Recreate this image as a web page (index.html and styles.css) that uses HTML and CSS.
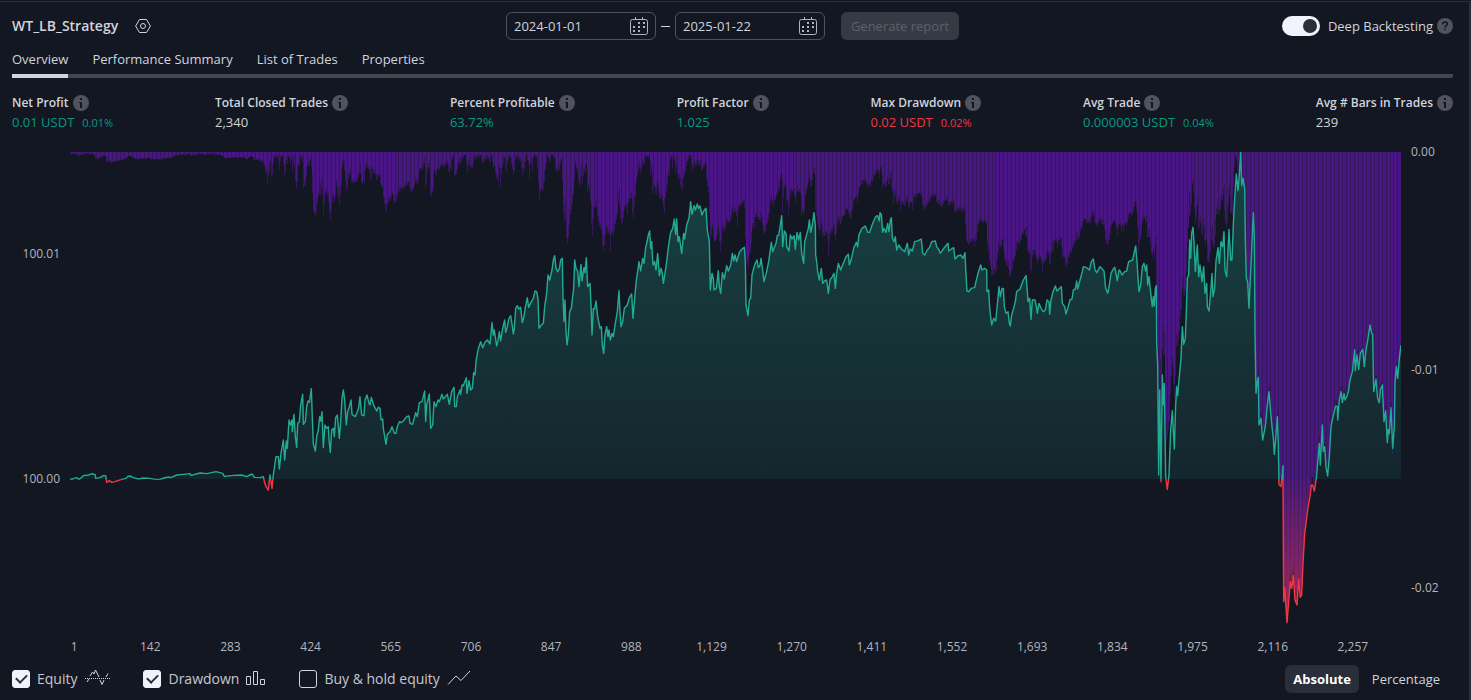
FILE: index.html
```html
<!DOCTYPE html>
<html lang="en">
<head>
<meta charset="utf-8">
<title>Strategy Tester</title>
<link rel="stylesheet" href="styles.css">
</head>
<body>
<svg class="defs" aria-hidden="true">
  <symbol id="info" viewBox="0 0 16 16"><circle cx="8" cy="8" r="8" fill="#50535e"/><path d="M7 3h2v2H7zM6 7h3v6H7V8H6z" fill="#131722"/></symbol>
  <symbol id="help" viewBox="0 0 16 16"><circle cx="8" cy="8" r="8" fill="#50535e"/><path d="M5.7 6.3C5.7 4.800 6.700 4 8 4s2.300.9 2.300 2c0 1.500-2.300 1.700-2.300 3.500M8 10.700v1.600" fill="none" stroke="#131722" stroke-width="1.600"/></symbol>
  <symbol id="calendar" viewBox="0 0 18 18"><rect x=".5" y="2.500" width="17" height="15" rx="2" fill="none" stroke="#b2b5be"/><path d="M5.500 0v3M12.500 0v3" stroke="#b2b5be"/><path d="M8 5h2v2H8zM13 5h2v2h-2zM3 9h2v2H3zM8 9h2v2H8zM13 9h2v2h-2zM3 13h2v2H3zM8 13h2v2H8z" fill="#b2b5be"/></symbol>
</svg>
<main class="tester">
  <header class="header">
    <div class="title">
      <h1 class="name">WT_LB_Strategy</h1>
      <button class="icon-button" aria-label="Settings">
        <svg width="16" height="16" viewBox="0 0 16 16" fill="none" stroke="#d1d4dc"><path d="M4.500 1.500h7L15.400 8l-3.900 6.500h-7L.6 8z"/><circle cx="8" cy="8" r="2.500"/></svg>
      </button>
    </div>
    <div class="range">
      <label class="date"><input type="text" value="2024-01-01" aria-label="From"><svg width="18" height="18"><use href="#calendar"/></svg></label>
      <span class="dash"></span>
      <label class="date"><input type="text" value="2025-01-22" aria-label="To"><svg width="18" height="18"><use href="#calendar"/></svg></label>
      <button class="generate" disabled>Generate report</button>
    </div>
    <div class="deep">
      <label class="deep-label"><input class="switch" type="checkbox" role="switch" checked>Deep Backtesting</label>
      <svg width="16" height="16"><use href="#help"/></svg>
    </div>
  </header>

  <nav class="tabs">
    <button class="tab active">Overview</button>
    <button class="tab">Performance Summary</button>
    <button class="tab">List of Trades</button>
    <button class="tab">Properties</button>
  </nav>

  <section class="metrics">
    <div class="metric"><div class="metric-title">Net Profit<svg width="16" height="16"><use href="#info"/></svg></div><div class="metric-value up">0.01 USDT<small>0.01%</small></div></div>
    <div class="metric"><div class="metric-title">Total Closed Trades<svg width="16" height="16"><use href="#info"/></svg></div><div class="metric-value">2,340</div></div>
    <div class="metric"><div class="metric-title">Percent Profitable<svg width="16" height="16"><use href="#info"/></svg></div><div class="metric-value up">63.72%</div></div>
    <div class="metric"><div class="metric-title">Profit Factor<svg width="16" height="16"><use href="#info"/></svg></div><div class="metric-value up">1.025</div></div>
    <div class="metric"><div class="metric-title">Max Drawdown<svg width="16" height="16"><use href="#info"/></svg></div><div class="metric-value down">0.02 USDT<small>0.02%</small></div></div>
    <div class="metric"><div class="metric-title">Avg Trade<svg width="16" height="16"><use href="#info"/></svg></div><div class="metric-value up">0.000003 USDT<small>0.04%</small></div></div>
    <div class="metric"><div class="metric-title">Avg # Bars in Trades<svg width="16" height="16"><use href="#info"/></svg></div><div class="metric-value">239</div></div>
  </section>

  <section class="chart">
    <div class="axis axis-left"><span class="tick-hi">100.01</span><span class="tick-lo">100.00</span></div>
    <svg class="plot" viewBox="210 21 3993 1416" preserveAspectRatio="none" role="img" aria-label="Equity and drawdown">
      <defs>
        <linearGradient id="fill" gradientUnits="userSpaceOnUse" x1="0" y1="21" x2="0" y2="1437">
          <stop offset="0" stop-color="#22ab94" stop-opacity=".3"/>
          <stop offset=".693" stop-color="#22ab94" stop-opacity=".1"/>
          <stop offset=".693" stop-color="#f23645" stop-opacity=".03"/>
          <stop offset="1" stop-color="#f23645" stop-opacity=".55"/>
        </linearGradient>
        <linearGradient id="stroke" gradientUnits="userSpaceOnUse" x1="0" y1="21" x2="0" y2="1437">
          <stop offset=".693" stop-color="#22ab94"/>
          <stop offset=".693" stop-color="#f23645"/>
        </linearGradient>
      </defs>
      <path id="dd-thin" fill="#33175a" shape-rendering="crispEdges"/>
      <path id="dd-solid" fill="#4a1584" shape-rendering="crispEdges"/>
      <path id="dd-gaps" fill="#33175a" shape-rendering="crispEdges"/>
      <path id="area" fill="url(#fill)"/>
      <path id="line" fill="none" stroke="url(#stroke)" stroke-width="1.400" stroke-linejoin="round" vector-effect="non-scaling-stroke"/>
    </svg>
    <div class="axis axis-right"><span>0.00</span><span class="tick-mid">-0.01</span><span class="tick-end">-0.02</span></div>
  </section>
  <div class="trades">
    <span>1</span><span>142</span><span>283</span><span>424</span><span>565</span><span>706</span><span>847</span><span>988</span><span>1,129</span><span>1,270</span><span>1,411</span><span>1,552</span><span>1,693</span><span>1,834</span><span>1,975</span><span>2,116</span><span>2,257</span>
  </div>

  <footer class="footer">
    <div class="series">
      <label class="check"><input type="checkbox" checked>Equity
        <svg width="26" height="18" viewBox="0 0 26 18" fill="none" stroke="#d1d4dc"><path d="M1 8.500h25" stroke-dasharray="1 1"/><path d="M3 12l2-3M6 6l2.500-4 1.500 2 1.500-4L15 7M16 10l2 4.500 2-4.500M22 7l2-3.500"/></svg></label>
      <label class="check"><input type="checkbox" checked>Drawdown
        <svg width="20" height="18" viewBox="0 0 20 18" fill="none" stroke="#d1d4dc"><path d="M.5 6.500h4v8h-4zM7.500 1.500h4v13h-4zM14.500 9.500h4v5h-4z"/></svg></label>
      <label class="check"><input type="checkbox">Buy &amp; hold equity
        <svg width="24" height="18" viewBox="0 0 24 18" fill="none" stroke="#d1d4dc"><path d="M1 14.500l8-8.500 5 4.500L23 1"/></svg></label>
    </div>
    <div class="units">
      <button class="unit active">Absolute</button>
      <button class="unit">Percentage</button>
    </div>
  </footer>
</main>
<script src="chart.js"></script>
</body>
</html>
```
FILE: styles.css
```css
* { box-sizing: border-box; }

body {
  margin: 0;
  background: #131722;
  color: #d1d4dc;
  font: 500 14px/20px "Trebuchet MS", "Open Sans", sans-serif;
}

button, input { font: inherit; color: inherit; }
button { border: 0; background: none; padding: 0; }
svg { display: block; flex: none; }

.defs { position: absolute; width: 0; height: 0; }

.tester {
  display: flex;
  flex-direction: column;
  min-height: calc(100vh - 1px);
  margin-top: 1px;
  border-top: 1px solid #2a2e39;
  border-right: 2px solid #2a2e39;
}

.header {
  display: grid;
  grid-template-columns: 1fr auto 1fr;
  align-items: center;
  padding: 10px 16px 0 12px;
}

.title { display: flex; align-items: center; gap: 17px; }
.name { margin: 0; font-size: 14px; line-height: 20px; font-weight: 600; }

.range { display: flex; align-items: center; }

.date {
  display: flex;
  align-items: center;
  width: 150px;
  height: 28px;
  padding: 0 7px;
  border: 1px solid #50535e;
  border-radius: 6px;
  font-size: 13px;
}
.date input {
  flex: 1;
  min-width: 0;
  padding: 0;
  border: 0;
  outline: 0;
  background: none;
}
.dash { width: 9px; height: 1px; margin: 0 5px; background: #d1d4dc; }

.generate {
  width: 118px;
  height: 28px;
  margin-left: 16px;
  border-radius: 6px;
  background: #363a45;
  color: #5d606b;
  font-size: 13px;
}

.deep { display: flex; justify-content: flex-end; align-items: center; gap: 4px; }
.deep-label { display: flex; align-items: center; gap: 8px; font-size: 13px; }

.switch {
  appearance: none;
  display: flex;
  justify-content: flex-end;
  align-items: center;
  width: 38px;
  height: 20px;
  margin: 0;
  padding: 3px;
  border-radius: 10px;
  background: #f0f3fa;
}
.switch::before {
  content: "";
  width: 14px;
  height: 14px;
  border-radius: 7px;
  background: #2a2e39;
}

.tabs {
  display: flex;
  gap: 24px;
  margin: 9px 16px 0 12px;
  border-radius: 2px;
  background: linear-gradient(#434651, #434651) bottom / 100% 4px no-repeat;
  font-size: 13px;
}
.tab { padding: 0 0 5px; border-bottom: 4px solid transparent; }
.tab.active { border-bottom-color: #d1d4dc; }

.metrics {
  display: flex;
  justify-content: space-between;
  padding: 16px 16px 0 12px;
}
.metric-title {
  display: flex;
  align-items: center;
  gap: 4px;
  font-size: 12px;
  line-height: 18px;
  font-weight: 600;
}
.metric-value { font-size: 13px; line-height: 20px; }
.metric-value small { margin-left: 8px; font-size: 11px; }
.up { color: #089981; }
.down { color: #f23645; }

.chart {
  flex: 1;
  display: grid;
  grid-template-columns: 70px 1fr 68px;
  min-height: 240px;
  margin-top: 19px;
}
.plot { width: 100%; height: 100%; contain: size; }

.axis { display: grid; font-size: 12px; line-height: 16px; color: #b2b5be; }
.axis-left { grid-template-rows: 94fr 16px 209fr 16px 137fr; padding-right: 10px; text-align: right; }
.axis-right { grid-template-rows: 16px 202fr 16px 202fr 16px 28fr; margin-top: -8px; padding-left: 10px; }
.tick-hi { grid-row: 2; }
.tick-lo { grid-row: 4; }
.tick-mid { grid-row: 3; }
.tick-end { grid-row: 5; }

.trades {
  display: grid;
  grid-template-columns: repeat(17, 1fr);
  margin: 15px 76px 0 30px;
  font-size: 12px;
  line-height: 16px;
  text-align: center;
  color: #b2b5be;
}
.trades span:first-child { padding-left: 8px; }

.footer {
  display: flex;
  justify-content: space-between;
  align-items: center;
  padding: 10px 16px 7px 12px;
}
.series { display: flex; gap: 33px; }
.check { display: flex; align-items: center; gap: 7px; color: #c5c8d0; }
.check input {
  appearance: none;
  width: 18px;
  height: 18px;
  margin: 0;
  border: 1px solid #d1d4dc;
  border-radius: 3px;
}
.check input:checked {
  display: grid;
  place-items: center;
  border-color: #f0f3fa;
  background: #f0f3fa;
}
.check input:checked::before {
  content: "";
  width: 9px;
  height: 5px;
  margin-bottom: 3px;
  border: solid #2a2e39;
  border-width: 0 0 2px 2px;
  transform: rotate(-45deg);
}

.units { display: flex; }
.unit { height: 28px; padding: 0 13px; border-radius: 6px; font-size: 13px; }
.unit.active { padding: 0 8px; background: #2a2e39; color: #fff; font-weight: 700; }
```
FILE: chart.js
```js
// Equity curve, in plot units. Each part lists x,y pairs relative to its own origin.
const parts = [
  [180, 0, "30,1002 36,1003 42,1000 50,998 56,1003 62,1000 70,992 85,990 97,986 106,990 107,1000 120,998 130,992 137,992 140,1012 148,1007 155,1012 165,1010 185,1003 198,1000 203,994 210,993 220,998 235,1002 250,999 270,1000 285,1003 300,1003 312,999 325,996 332,998 350,990 370,988 390,986 393,991 420,984 440,986 468,980 488,985 493,994 520,991 545,990 560,995 570,990 577,987 583,997 600,998 610,995 613,1010 618,1025 625,1035 630,990 636,1030 640,990 648,935 655,935 658,972 663,925 670,885 674,945 679,888 682,910 687,825 692,840 696,825 697,860 702,808 706,875 710,907 713,835 718,830 722,780 728,748 730,838 736,830 740,785 744,768 748,772 754,731 757,820 760,897 766,918 770,875 775,855 779,815 782,828 786,800 790,908 795,840 800,850 805,845 807,885 811,922 815,855 820,850 823,875 827,818 832,810 838,880 842,830 846,760 850,735 854,765 859,840 863,800 868,785 873,765 876,808 886,815 892,800 896,788 900,755 905,810 912,812 915,765 921,750 927,775 930,780 934,757 940,778 950,798 955,787 960,790 963,825 968,822 970,850 978,898 982,868 990,860 996,845 1003,865 1008,865 1012,845 1018,830"],
  [1200, 0, "3,833 10,828 20,815 27,813 30,835 38,838 47,803 52,815 58,773 66,770 74,738 77,830 80,780 88,747 92,850 98,840 102,770 108,785 114,765 118,770 126,748 130,762 142,748 148,778 155,740 162,727 164,785 169,785 172,755 180,735 182,748 186,720 190,722 199,698 201,745 207,707 212,735 217,730 221,683 225,690 228,650 233,620 236,608 242,590 248,608 255,592 262,585 270,597 276,533 280,570 283,555 290,603 294,587 298,560 302,588 308,550 314,525 317,562 322,545 326,522 332,512 336,537 340,567 343,550 347,490 352,482 356,492 362,487 367,533 372,515 376,487 382,458 386,487 394,470 400,460 405,438 410,440 414,462 417,550 424,540 430,535 434,485 440,445 444,390 449,405 456,375 460,345 464,332 468,370 473,380 478,372 482,345 487,340 489,460 492,530 495,465 498,560 501,600 505,570 509,500 514,490 518,455 521,430 524,345 528,370 533,378 537,425 543,358 546,408 552,368 555,383 559,338 563,425 570,415 573,480 576,570 580,490 584,492 588,468 593,515 600,550 604,545 607,600 611,625 615,570 620,545 624,575 627,555 631,585 636,565 640,575 645,540 652,500 657,437 660,500 663,545 668,530 673,490 682,480 688,458 695,447 699,520 704,460 709,405 713,380 717,350 722,378 728,340 732,355 737,308 740,295 745,270 749,258 752,310"],
  [1920, 0, "35,290 39,360 44,350 48,375 53,325 58,392 63,370 67,385 70,415 75,385 80,350 86,300 92,262 98,250 103,222 107,268 110,222 114,290 118,275 125,325 131,265 134,282 140,240 147,220 152,170 156,208 162,182 166,195 172,177 175,190 180,183 186,210 193,195 198,190 202,255 208,290 211,435 216,385 220,400 222,435 229,430 235,377 238,425 242,445 247,383 253,402 260,362 265,378 272,360 277,325 281,348 285,330 290,350 298,322 306,312 313,307 316,350 318,480 324,512 328,465 332,460 336,390 341,370 346,355 351,345 355,368 360,362 363,340 368,375 372,410 380,380 386,350 394,292 398,320 404,305 408,295 412,272 416,270 421,240 425,212 428,305 433,258 438,265 440,305 447,318 451,270 456,282 462,272 466,313 471,262 476,285 481,262 485,325 491,355 494,290 500,268 505,250 508,225 512,262 517,240 522,203 526,240 527,330 530,350 533,380 538,405 544,370 548,415 554,408 560,405 565,445 570,405 577,395 582,385 586,430 590,385 595,355 602,375 610,355 618,335 625,328 628,360 634,342 641,310 649,292 653,305 657,268 666,250 676,243 683,262 689,262 697,238 707,215 713,212 718,228"],
  [2640, 0, "0,203 4,208 8,262 12,250 18,262 23,235 27,260 31,225 34,218 37,278 42,290 46,275 50,315 56,300 64,312 74,320 82,295 86,330 91,312 97,318 104,290 115,287 124,282 128,325 134,330 142,315 148,308 155,290 166,288 170,305 177,315 181,325 190,312 197,303 204,295 206,318 214,312 221,308 225,342 233,333 242,330 249,340 255,323 258,390 261,438 267,440 273,430 284,428 288,410 294,385 302,360 306,375 314,370 320,375 321,440 326,435 329,490 335,540 341,520 347,528 352,480 357,425 361,455 366,430 370,430 373,485 378,505 384,500 388,535 391,543 395,510 401,490 406,470 410,440 420,432 430,405 438,392 442,440 444,470 449,460 453,523 457,465 465,465 470,490 472,505 477,475 483,490 490,500 496,495 501,465 507,470 509,508 513,465 519,440 526,423 531,438 544,425 547,475 554,485 558,507 564,487 570,465 576,462 580,435 586,432 590,408 593,432 600,405 607,380 610,365 620,368 628,375 634,350 640,342 645,375 650,383 660,365 672,378 677,430 683,445 688,420 693,385 700,372 704,367 707,380 712,407 717,375"],
  [3360, 0, "0,377 6,390 14,380 20,378 26,350 38,345 42,325 47,303 51,350 54,400 57,440 62,420 67,365 72,355 77,378 80,360 83,420 87,395 90,425 95,470 97,485 100,455 103,483 106,430 109,422 110,590 113,660 116,990 119,735 123,1010 127,690 130,780 133,715 137,995 142,1033 147,990 152,855 157,797 163,912 167,780 170,725 173,752 177,705 183,640 187,545 191,598 196,580 199,500 202,400 206,390 209,285 212,340 215,265 219,247 222,290 226,380 232,300 236,395 240,360 246,410 251,365 255,445 260,415 262,485 267,498 273,430 276,385 279,455 284,430 288,348 294,308 298,355 303,290 308,305 312,260 315,375 320,395 327,253 332,345 336,345 340,240 344,160 349,87 354,137 358,90 362,22 365,120 369,100 374,130 376,280 379,400 383,412 387,490 392,380 396,290 400,203 403,280 405,560 408,745 412,710 415,697 417,840 423,820 428,885 433,860 437,835 442,780 447,740 451,790 456,845 460,880 463,928 468,870 472,815 475,900 477,1018 483,1025 487,985 489,962"],
  [3720, 465, "129,540 131,905 134,862 137,905 141,968 146,905 151,845 155,865 160,827 165,900 171,915 176,838 181,892 185,885 189,790 194,700 200,655 205,615 210,590 214,555 218,555 223,573 229,535 232,500 238,430 241,495 247,375 250,455 254,440 258,500 263,528 268,470 273,380 280,345 287,318 292,320 293,360 298,300 303,275 307,308 312,280 315,300 320,290 325,275 330,240 337,215 344,150 346,212 351,165 356,208 361,160 368,148 373,200 378,150 384,115 390,75 394,95 398,105 401,275 408,238 413,295 418,308 421,270 427,255 432,365 437,333 442,428 445,388 448,400 453,323 458,445 463,380 465,250 469,200 473,235 478,175 483,135"]
];

const TOP = 21, BASE = 1002, LEFT = 210, RIGHT = 4203;
const DD_SCALE = 0.967;

const points = parts.flatMap(([ox, oy, text]) =>
  text.split(" ").map(pair => {
    const [x, y] = pair.split(",").map(Number);
    return [x + ox, y + oy];
  }));

const line = "M" + points.map(p => p.join(" ")).join("L");
document.getElementById("line").setAttribute("d", line);
document.getElementById("area").setAttribute("d", `${line}L${RIGHT} ${BASE}L${LEFT} ${BASE}Z`);

// Drawdown bars hang from the top: distance of the equity from its running peak.
const STEP = 3;
let thin = "", solid = "", gaps = "";
let peak = BASE, index = 0, seed = 7;
const random = () => (seed = (seed * 16807) % 2147483647) / 2147483647;

for (let x = LEFT; x < RIGHT; x += STEP) {
  let low = Infinity, high = 0;
  for (let s = x; s < x + STEP; s++) {
    while (index < points.length - 2 && points[index + 1][0] <= s) index++;
    const [x0, y0] = points[index], [x1, y1] = points[index + 1];
    const y = y0 + (y1 - y0) * (s - x0) / (x1 - x0);
    peak = Math.min(peak, y);
    const depth = (y - peak) * DD_SCALE;
    low = Math.min(low, depth);
    high = Math.max(high, depth);
  }
  const calm = x < 780;
  low += calm ? 4 : 9;
  high += calm ? 4 + random() * 5 : 9 + random() * 12;
  if (!calm && random() < 0.08) high += random() * 36;
  thin += `M${x} ${TOP}h${STEP}v${high.toFixed(0)}h-${STEP}z`;
  solid += `M${x} ${TOP}h${STEP}v${low.toFixed(0)}h-${STEP}z`;
  if (Math.floor(x / 11.94) !== Math.floor((x - STEP) / 11.94)) {
    gaps += `M${x} ${TOP}h${STEP}v${low.toFixed(0)}h-${STEP}z`;
  }
}
document.getElementById("dd-thin").setAttribute("d", thin);
document.getElementById("dd-solid").setAttribute("d", solid);
document.getElementById("dd-gaps").setAttribute("d", gaps);
```
